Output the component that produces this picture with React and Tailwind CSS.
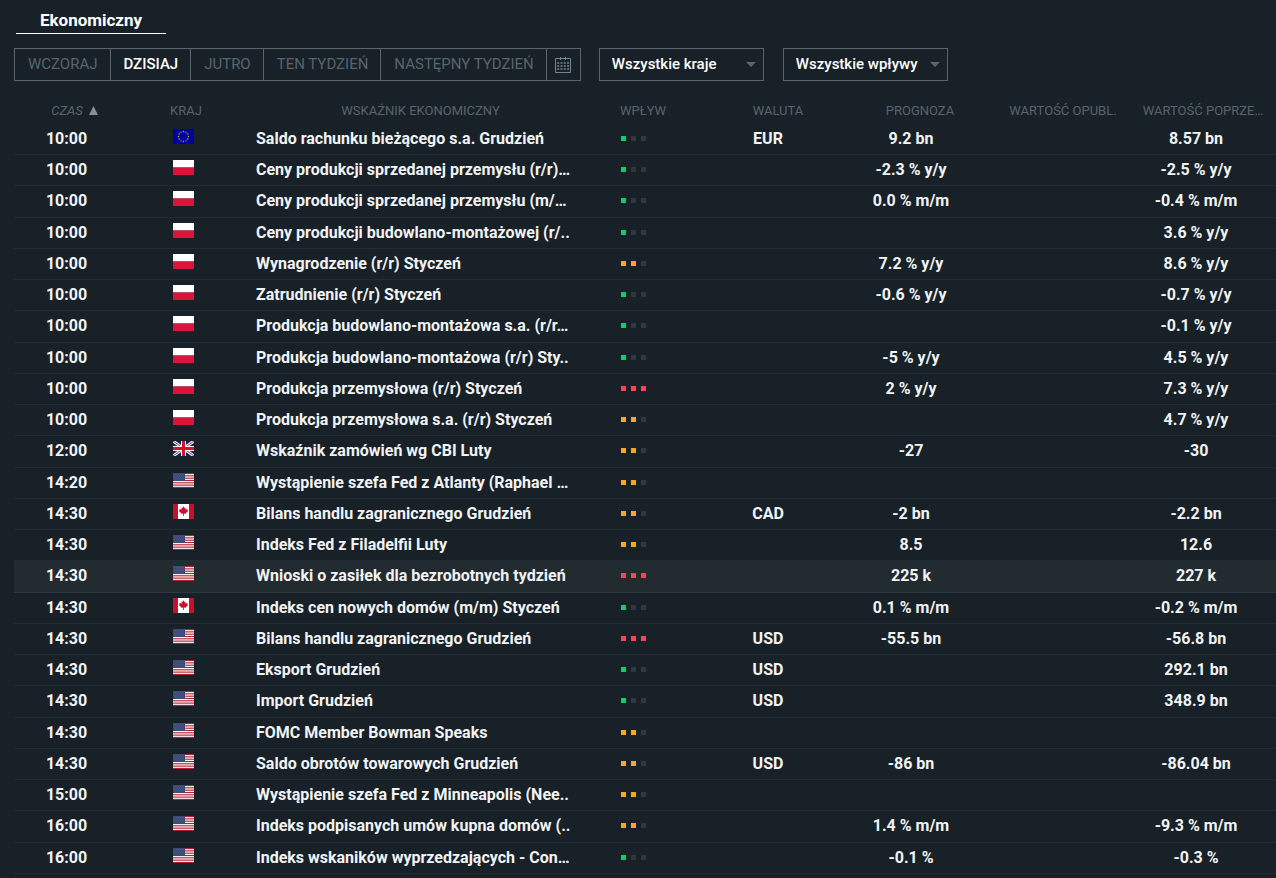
import clsx from "clsx";

const EVENTS = [
    ["10:00", "eu", "Saldo rachunku bieżącego s.a. Grudzień", 1, "EUR", "9.2 bn", "8.57 bn"],
    ["10:00", "pl", "Ceny produkcji sprzedanej przemysłu (r/r)…", 1, "", "-2.3 % y/y", "-2.5 % y/y"],
    ["10:00", "pl", "Ceny produkcji sprzedanej przemysłu (m/…", 1, "", "0.0 % m/m", "-0.4 % m/m"],
    ["10:00", "pl", "Ceny produkcji budowlano-montażowej (r/..", 1, "", "", "3.6 % y/y"],
    ["10:00", "pl", "Wynagrodzenie (r/r) Styczeń", 2, "", "7.2 % y/y", "8.6 % y/y"],
    ["10:00", "pl", "Zatrudnienie (r/r) Styczeń", 1, "", "-0.6 % y/y", "-0.7 % y/y"],
    ["10:00", "pl", "Produkcja budowlano-montażowa s.a. (r/r…", 1, "", "", "-0.1 % y/y"],
    ["10:00", "pl", "Produkcja budowlano-montażowa (r/r) Sty..", 1, "", "-5 % y/y", "4.5 % y/y"],
    ["10:00", "pl", "Produkcja przemysłowa (r/r) Styczeń", 3, "", "2 % y/y", "7.3 % y/y"],
    ["10:00", "pl", "Produkcja przemysłowa s.a. (r/r) Styczeń", 2, "", "", "4.7 % y/y"],
    ["12:00", "gb", "Wskaźnik zamówień wg CBI Luty", 2, "", "-27", "-30"],
    ["14:20", "us", "Wystąpienie szefa Fed z Atlanty (Raphael …", 2, "", "", ""],
    ["14:30", "ca", "Bilans handlu zagranicznego Grudzień", 2, "CAD", "-2 bn", "-2.2 bn"],
    ["14:30", "us", "Indeks Fed z Filadelfii Luty", 2, "", "8.5", "12.6"],
    ["14:30", "us", "Wnioski o zasiłek dla bezrobotnych tydzień", 3, "", "225 k", "227 k"],
    ["14:30", "ca", "Indeks cen nowych domów (m/m) Styczeń", 1, "", "0.1 % m/m", "-0.2 % m/m"],
    ["14:30", "us", "Bilans handlu zagranicznego Grudzień", 3, "USD", "-55.5 bn", "-56.8 bn"],
    ["14:30", "us", "Eksport Grudzień", 1, "USD", "", "292.1 bn"],
    ["14:30", "us", "Import Grudzień", 1, "USD", "", "348.9 bn"],
    ["14:30", "us", "FOMC Member Bowman Speaks", 2, "", "", ""],
    ["14:30", "us", "Saldo obrotów towarowych Grudzień", 2, "USD", "-86 bn", "-86.04 bn"],
    ["15:00", "us", "Wystąpienie szefa Fed z Minneapolis (Nee..", 2, "", "", ""],
    ["16:00", "us", "Indeks podpisanych umów kupna domów (..", 2, "", "1.4 % m/m", "-9.3 % m/m"],
    ["16:00", "us", "Indeks wskaników wyprzedzających - Con…", 1, "", "-0.1 %", "-0.3 %"],
];

const SELECTED = 14;

const RANGES = ["WCZORAJ", "DZISIAJ", "JUTRO", "TEN TYDZIEŃ", "NASTĘPNY TYDZIEŃ"];

const IMPACT_COLORS = { 1: "bg-[#0bd162]", 2: "bg-[#ffa526]", 3: "bg-[#ff444f]" };

const FLAGS = {
    eu: (
        <>
            <path fill="#00009c" d="M0 0h21v15H0z" />
            {Array.from({ length: 12 }, (_, i) => (
                <circle
                    key={i}
                    cx={10.5 + 5 * Math.sin((i * Math.PI) / 6)}
                    cy={7.5 - 5 * Math.cos((i * Math.PI) / 6)}
                    r="0.7"
                    fill="#d6c04a"
                />
            ))}
        </>
    ),
    pl: (
        <>
            <path fill="#fff" d="M0 0h21v7.5H0z" />
            <path fill="#dc143c" d="M0 7.5h21V15H0z" />
        </>
    ),
    gb: (
        <>
            <path fill="#00247d" d="M0 0h21v15H0z" />
            <path stroke="#fff" strokeWidth="3" d="M0 0l21 15M21 0L0 15" />
            <path stroke="#cf142b" strokeWidth="1" d="M0 0l21 15M21 0L0 15" />
            <path stroke="#fff" strokeWidth="5" d="M10.5 0v15M0 7.5h21" />
            <path stroke="#cf142b" strokeWidth="3" d="M10.5 0v15M0 7.5h21" />
        </>
    ),
    us: (
        <>
            <path fill="#fff" d="M0 0h21v15H0z" />
            {[0, 2, 4, 6, 8, 10, 12].map((n) => (
                <path key={n} fill="#b22234" d={`M0 ${(n * 15) / 13}h21v1.15H0z`} />
            ))}
            <path fill="#3c4a78" d="M0 0h12v8H0z" />
            <path stroke="#66719a" strokeWidth="0.5" strokeDasharray="0.7 1.3" d="M1 1.5h10M2 3h9M1 4.5h10M2 6h9" />
        </>
    ),
    ca: (
        <>
            <path fill="#fff" d="M0 0h21v15H0z" />
            <path fill="#c8102e" d="M0 0h5v15H0zM16 0h5v15h-5z" />
            <path
                fill="#c8102e"
                d="M10.5 2.2l1 1.9 1.1-.5-.4 2.4 1.2-1.2.3.7 1.3-.2-.5 1.3.7.5-2.2 1.8.2.9-2.3-.3v2.6h-.8V9.5l-2.3.3.2-.9-2.2-1.8.7-.5-.5-1.300 1.300.2.300-.7 1.200 1.200-.4-2.400 1.100.5z"
            />
        </>
    ),
};

const Flag = ({ code }) => (
    <svg viewBox="0 0 21 15" className="mx-auto block h-[15px] w-[21px]" role="img" aria-label={code}>
        {FLAGS[code]}
    </svg>
);

const Impact = ({ level }) => (
    <div className="flex justify-center gap-[5px] pt-[7px]">
        {[1, 2, 3].map((n) => (
            <span key={n} className={clsx("size-[5px]", n <= level ? IMPACT_COLORS[level] : "bg-[#2e383e]")} />
        ))}
    </div>
);

const CalendarIcon = () => (
    <svg viewBox="0 0 16 16" className="size-4" fill="none" stroke="#72858f">
        <path d="M.5 1.500h15v14H.5z" />
        <path d="M5.500 0v3M10.500 0v3" />
        <path strokeWidth="1.500" strokeDasharray="2 1.300" d="M2.200 6h12M2.200 9h12M2.200 12h12" />
    </svg>
);

const Select = ({ label }) => (
    <div className="relative">
        <select
            aria-label={label}
            className="h-[33px] w-[165px] appearance-none border border-[#59646c] bg-transparent pr-7 pl-3 text-[15px] font-medium text-white"
        >
            <option>{label}</option>
        </select>
        <svg viewBox="0 0 10 5" className="pointer-events-none absolute top-[14px] right-2 h-[5px] w-[10px]" fill="#59646c">
            <path d="M0 0h10L5 5z" />
        </svg>
    </div>
);

const App = () => {
    return (
        <main className="min-h-screen bg-[#172127] pl-3.5 font-[Roboto,sans-serif] text-white">
            <nav className="ml-0.5 flex h-[34px]">
                <a href="#ekonomiczny" className="w-[150px] border-b border-white pt-2 text-center text-[17px] leading-6 font-bold">
                    Ekonomiczny
                </a>
            </nav>

            <div className="mt-3.5 flex">
                <div className="flex h-[33px] divide-x divide-[#59646c] border border-[#59646c] text-[15px]">
                    {RANGES.map((range) => (
                        <button
                            key={range}
                            className={clsx("pr-3 pl-[13px]", range === "DZISIAJ" ? "font-medium text-white" : "text-[#59646c]")}
                        >
                            {range}
                        </button>
                    ))}
                    <button aria-label="Kalendarz" className="flex w-[33px] items-center justify-center">
                        <CalendarIcon />
                    </button>
                </div>
                <div className="ml-[18px] flex gap-[19px]">
                    <Select label="Wszystkie kraje" />
                    <Select label="Wszystkie wpływy" />
                </div>
            </div>

            <table className="mt-[19px] w-full table-fixed border-separate border-spacing-0 text-center text-base leading-5">
                <colgroup>
                    <col className="w-[105px]" />
                    <col className="w-[128px]" />
                    <col />
                    <col className="w-[118px]" />
                    <col className="w-[152px]" />
                    <col className="w-[132px]" />
                    <col className="w-[144px]" />
                    <col className="w-[146px]" />
                </colgroup>
                <thead className="text-[13px] text-[#59646c] [&_th]:pb-0.5 [&_th]:font-normal">
                    <tr className="h-6">
                        <th className="pl-4">
                            <em>CZAS</em>
                            <svg viewBox="0 0 9 9" className="ml-1.5 inline-block size-[9px] align-baseline" fill="#8b8e90">
                                <path d="M4.500 0L9 9H0z" />
                            </svg>
                        </th>
                        <th className="pl-1.5">KRAJ</th>
                        <th className="pl-2.5">WSKAŹNIK EKONOMICZNY</th>
                        <th>WPŁYW</th>
                        <th>WALUTA</th>
                        <th>PROGNOZA</th>
                        <th className="pl-2.5">WARTOŚĆ OPUBL.</th>
                        <th className="truncate px-2.5">WARTOŚĆ POPRZE…</th>
                    </tr>
                </thead>
                <tbody className="font-bold text-[#f2f3f4] [&_td]:border-b [&_td]:pt-[5px] [&_td]:align-top">
                    {EVENTS.map(([time, flag, name, impact, currency, forecast, previous], i) => (
                        <tr
                            key={i}
                            className={clsx(
                                "h-[31px] nth-[4n+3]:h-8",
                                i === SELECTED ? "bg-[#222c30] [&_td]:border-[#2e383e]" : "[&_td]:border-[#222c32]"
                            )}
                        >
                            <td>{time}</td>
                            <td>
                                <Flag code={flag} />
                            </td>
                            <td className="pl-[9px] text-left whitespace-nowrap">{name}</td>
                            <td className="pr-5">
                                <Impact level={impact} />
                            </td>
                            <td className="pr-5">{currency}</td>
                            <td className="pr-[18px]">{forecast}</td>
                            <td></td>
                            <td className="pr-3.5">{previous}</td>
                        </tr>
                    ))}
                </tbody>
            </table>
        </main>
    );
};

export default App;
